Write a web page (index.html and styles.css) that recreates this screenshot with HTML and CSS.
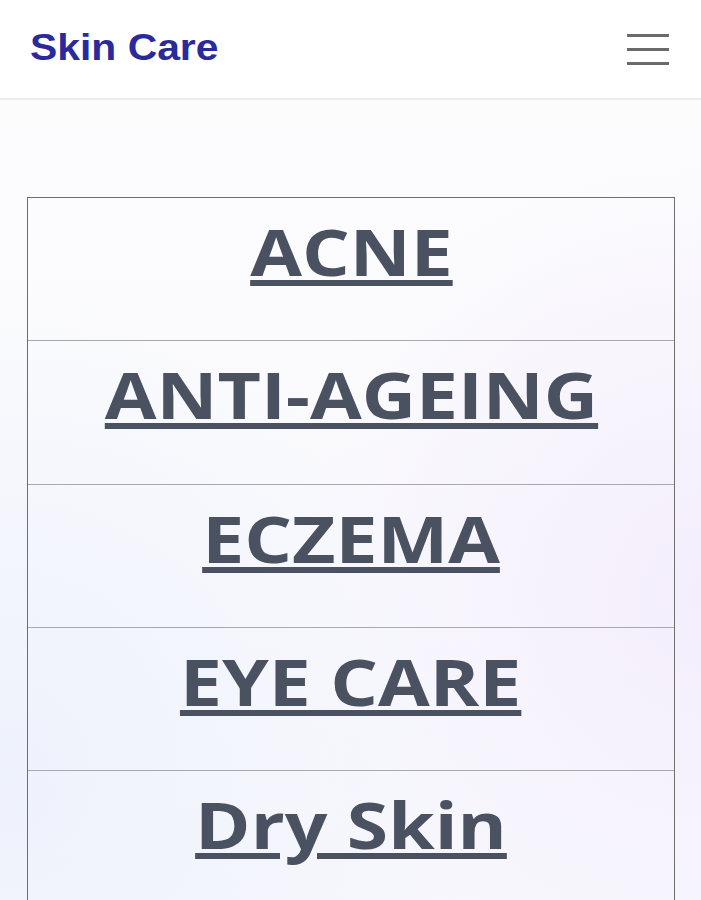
FILE: index.html
```html
<!DOCTYPE html>
<html lang="en">
<head>
<meta charset="utf-8">
<title>Skin Care</title>
<link rel="stylesheet" href="styles.css">
</head>
<body>
<header class="topbar">
  <a class="brand" href="#">Skin Care</a>
  <button class="menu-btn" aria-label="Menu">
    <svg width="42" height="32" viewBox="0 0 42 32" aria-hidden="true">
      <rect x="0" y="1" width="42" height="3" fill="#6a6a6a"/>
      <rect x="0" y="15" width="42" height="3" fill="#6a6a6a"/>
      <rect x="0" y="29" width="42" height="3" fill="#6a6a6a"/>
    </svg>
  </button>
</header>
<main class="content">
  <ul class="cats">
    <li class="cat"><a href="#">ACNE</a></li>
    <li class="cat"><a href="#">ANTI-AGEING</a></li>
    <li class="cat"><a href="#">ECZEMA</a></li>
    <li class="cat"><a href="#">EYE CARE</a></li>
    <li class="cat"><a href="#">Dry Skin</a></li>
  </ul>
</main>
</body>
</html>
```

FILE: styles.css
```css
* { box-sizing: border-box; }
html, body { margin: 0; padding: 0; }
body {
  min-height: 100vh;
  font-family: "Open Sans", "Liberation Sans", sans-serif;
  background:
    radial-gradient(ellipse 70% 55% at 0% 85%, #eef2fc 0%, rgba(238, 242, 252, 0) 100%),
    radial-gradient(ellipse 60% 50% at 100% 65%, #f4eefc 0%, rgba(244, 238, 252, 0) 100%),
    linear-gradient(180deg, #fdfdfe 0%, #f8f8fc 100%);
}
.topbar {
  height: 100px;
  background: #ffffff;
  border-bottom: 2px solid #ececef;
  display: flex;
  align-items: center;
  justify-content: space-between;
  padding: 0 32px 2px 30px;
}
.brand {
  font-family: "Liberation Sans", Arial, sans-serif;
  font-weight: bold;
  font-size: 36px;
  color: #2a2a9c;
  text-decoration: none;
  display: inline-block;
  transform: scaleX(1.135);
  transform-origin: left center;
}
.menu-btn {
  background: none;
  border: 0;
  padding: 0;
  display: flex;
  margin-top: 1px;
}
.content {
  padding: 97px 26px 0 27px;
}
.cats {
  list-style: none;
  margin: 0;
  padding: 0;
  border: 1px solid #6e6e6e;
  border-bottom: 0;
}
.cat {
  border-bottom: 1px solid #a9a9ad;
  text-align: center;
  padding: 6px 0 0;
  height: 143.3px;
}
.cat a {
  font-family: "Open Sans", sans-serif;
  font-weight: 700;
  font-size: 64px;
  line-height: 96px;
  color: #4a5262;
  text-decoration: underline;
  display: inline-block;
  transform: scaleX(1.172);
}
```
